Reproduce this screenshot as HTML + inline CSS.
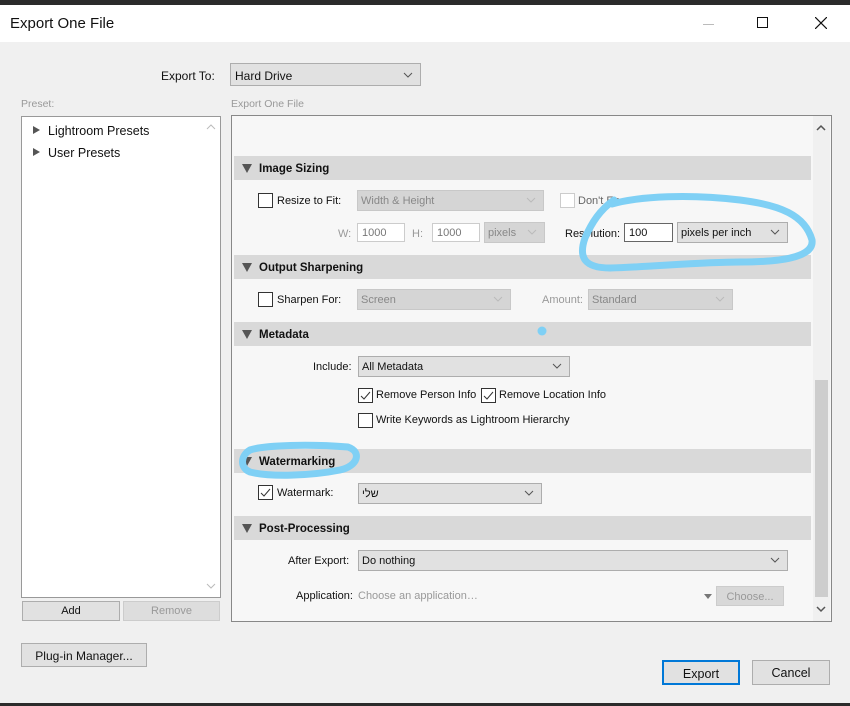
<!DOCTYPE html>
<html><head><meta charset="utf-8"><style>
*{box-sizing:border-box;margin:0;padding:0}
body{width:850px;height:706px;background:#2b2b2b;position:relative;overflow:hidden;font-family:"Liberation Sans","Noto Sans CJK JP",sans-serif;font-size:11px;color:#111}
.a{position:absolute;white-space:nowrap}
.dlg{position:absolute;left:0;top:5px;width:850px;height:698px;background:#f0f0f0}
.tb{position:absolute;left:0;top:5px;width:850px;height:37px;background:#fff}
.sel{position:absolute;background:#e1e1e1;border:1px solid #adadad;height:21px;padding:4px 3px 0;font-size:11px}
.sel.dis{background:#d5d5d5;border-color:#c8c8c8;color:#888}
.chev{position:absolute;right:6px;top:3px;width:12px;height:12px}
.inp{position:absolute;background:#fff;border:1px solid #aaa;height:19px;padding:3px 4px 0}
.inp.dis{border-color:#ccc;color:#777}
.cb{position:absolute;width:15px;height:15px;border:1px solid #333;background:#fff}
.cb.dis{border-color:#ccc}
.hdr{position:absolute;left:234px;width:577px;height:24px;background:#d9d9d9;font-weight:bold;font-size:11.5px;padding:7px 0 0 25px}
.tri{position:absolute;left:8px;top:8px;width:0;height:0;border-left:5px solid transparent;border-right:5px solid transparent;border-top:9px solid #555}
.btn{position:absolute;background:#e1e1e1;border:1px solid #adadad;text-align:center;font-size:12px}
.g{color:#999}
.l{margin-top:1px}
</style></head><body>
<div class="dlg"></div>
<div class="tb"></div>
<div class="a" style="left:10px;top:15px;font-size:15px">Export One File</div>
<div class="a" style="left:703px;top:24px;width:11px;height:1px;background:#bbb"></div>
<div class="a" style="left:757px;top:17px;width:11px;height:11px;border:1px solid #111"></div>
<svg class="a" style="left:815px;top:17px" width="12" height="12"><path d="M0 0L12 12M12 0L0 12" stroke="#111" stroke-width="1.2"/></svg>

<div class="a" style="left:161px;top:69px;font-size:12px">Export To:</div>
<div class="sel" style="left:230px;top:63px;width:191px;height:23px;font-size:12px;padding:5px 4px 0">Hard Drive<svg class="chev" style="top:5px" viewBox="0 0 12 12"><path d="M2 4l4 4 4-4" fill="none" stroke="#555"/></svg></div>

<div class="a g" style="left:21px;top:98px;font-size:10.5px">Preset:</div>
<div class="a g" style="left:231px;top:98px;font-size:10.5px">Export One File</div>

<div class="a" style="left:21px;top:116px;width:200px;height:482px;background:#fff;border:1px solid #999"></div>
<svg class="a" style="left:206px;top:123px" width="10" height="8"><path d="M1 6l4-4 4 4" fill="none" stroke="#bbb"/></svg>
<svg class="a" style="left:206px;top:582px" width="10" height="8"><path d="M1 2l4 4 4-4" fill="none" stroke="#bbb"/></svg>
<div class="a" style="left:33px;top:126px;border-top:4px solid transparent;border-bottom:4px solid transparent;border-left:7px solid #555"></div>
<div class="a" style="left:48px;top:124px;font-size:12.5px">Lightroom Presets</div>
<div class="a" style="left:33px;top:148px;border-top:4px solid transparent;border-bottom:4px solid transparent;border-left:7px solid #555"></div>
<div class="a" style="left:48px;top:146px;font-size:12.5px">User Presets</div>
<div class="btn" style="left:22px;top:601px;width:98px;height:20px;padding-top:3px;font-size:11px">Add</div>
<div class="btn" style="left:123px;top:601px;width:97px;height:20px;padding-top:3px;font-size:11px;color:#999;background:#ddd;border-color:#ccc">Remove</div>

<div class="a" style="left:231px;top:115px;width:601px;height:507px;background:#f7f7f7;border:1px solid #888"></div>
<div class="a" style="left:813px;top:116px;width:17px;height:505px;background:#f0f0f0"></div>
<div class="a" style="left:815px;top:380px;width:13px;height:217px;background:#cdcdcd"></div>
<svg class="a" style="left:816px;top:124px" width="10" height="8"><path d="M1 6l4-4 4 4" fill="none" stroke="#555" stroke-width="1.5"/></svg>
<svg class="a" style="left:816px;top:605px" width="10" height="8"><path d="M1 2l4 4 4-4" fill="none" stroke="#555" stroke-width="1.5"/></svg>

<div class="hdr" style="top:156px"><div class="tri"></div>Image Sizing</div>
<div class="cb" style="left:258px;top:193px"></div>
<div class="a" style="left:277px;top:195px">Resize to Fit:</div>
<div class="sel dis" style="left:357px;top:190px;width:187px">Width &amp; Height<svg class="chev" viewBox="0 0 12 12"><path d="M2 4l4 4 4-4" fill="none" stroke="#bbb"/></svg></div>
<div class="cb dis" style="left:560px;top:193px"></div>
<div class="a" style="left:578px;top:195px;color:#666">Don't En</div>
<div class="a g" style="left:338px;top:228px">W:</div>
<div class="inp dis" style="left:357px;top:223px;width:48px">1000</div>
<div class="a g" style="left:412px;top:228px">H:</div>
<div class="inp dis" style="left:432px;top:223px;width:48px">1000</div>
<div class="sel dis" style="left:484px;top:222px;width:61px">pixels<svg class="chev" viewBox="0 0 12 12"><path d="M2 4l4 4 4-4" fill="none" stroke="#bbb"/></svg></div>
<div class="a" style="left:565px;top:228px">Resolution:</div>
<div class="inp" style="left:624px;top:223px;width:49px;border-color:#666">100</div>
<div class="sel" style="left:677px;top:222px;width:111px">pixels per inch<svg class="chev" viewBox="0 0 12 12"><path d="M2 4l4 4 4-4" fill="none" stroke="#555"/></svg></div>

<div class="hdr" style="top:255px"><div class="tri"></div>Output Sharpening</div>
<div class="cb" style="left:258px;top:292px"></div>
<div class="a" style="left:277px;top:294px">Sharpen For:</div>
<div class="sel dis" style="left:357px;top:289px;width:154px">Screen<svg class="chev" viewBox="0 0 12 12"><path d="M2 4l4 4 4-4" fill="none" stroke="#bbb"/></svg></div>
<div class="a g" style="left:542px;top:294px">Amount:</div>
<div class="sel dis" style="left:588px;top:289px;width:145px">Standard<svg class="chev" viewBox="0 0 12 12"><path d="M2 4l4 4 4-4" fill="none" stroke="#bbb"/></svg></div>

<div class="hdr" style="top:322px"><div class="tri"></div>Metadata</div>
<div class="a" style="left:313px;top:361px">Include:</div>
<div class="sel" style="left:358px;top:356px;width:212px">All Metadata<svg class="chev" viewBox="0 0 12 12"><path d="M2 4l4 4 4-4" fill="none" stroke="#555"/></svg></div>
<div class="cb" style="left:358px;top:388px"><svg width="13" height="13"><path d="M2 7l3 3 6-7" fill="none" stroke="#333"/></svg></div>
<div class="a" style="left:376px;top:389px">Remove Person Info</div>
<div class="cb" style="left:481px;top:388px"><svg width="13" height="13"><path d="M2 7l3 3 6-7" fill="none" stroke="#333"/></svg></div>
<div class="a" style="left:499px;top:389px">Remove Location Info</div>
<div class="cb" style="left:358px;top:413px"></div>
<div class="a" style="left:376px;top:414px">Write Keywords as Lightroom Hierarchy</div>

<div class="hdr" style="top:449px"><div class="tri"></div>Watermarking</div>
<div class="cb" style="left:258px;top:485px"><svg width="13" height="13"><path d="M2 7l3 3 6-7" fill="none" stroke="#333"/></svg></div>
<div class="a" style="left:277px;top:487px">Watermark:</div>
<div class="sel" style="left:358px;top:483px;width:184px">שלי<svg class="chev" viewBox="0 0 12 12"><path d="M2 4l4 4 4-4" fill="none" stroke="#555"/></svg></div>

<div class="hdr" style="top:516px"><div class="tri"></div>Post-Processing</div>
<div class="a" style="left:288px;top:555px">After Export:</div>
<div class="sel" style="left:358px;top:550px;width:430px">Do nothing<svg class="chev" viewBox="0 0 12 12"><path d="M2 4l4 4 4-4" fill="none" stroke="#555"/></svg></div>
<div class="a" style="left:296px;top:590px">Application:</div>
<div class="a g" style="left:358px;top:590px">Choose an application…</div>
<div class="a" style="left:704px;top:594px;border-left:4px solid transparent;border-right:4px solid transparent;border-top:5px solid #777"></div>
<div class="btn" style="left:716px;top:586px;width:68px;height:20px;padding-top:4px;font-size:11px;color:#999;background:#d8d8d8;border-color:#ccc">Choose...</div>

<div class="btn" style="left:21px;top:643px;width:126px;height:24px;padding-top:5px;font-size:12px">Plug-in Manager...</div>
<div class="btn" style="left:662px;top:660px;width:78px;height:25px;padding-top:5px;border:2px solid #0078d7;font-size:12.5px">Export</div>
<div class="btn" style="left:752px;top:660px;width:78px;height:25px;padding-top:5px;font-size:12.5px">Cancel</div>

<svg class="a" style="left:0;top:0" width="850" height="706">
<g fill="none" stroke="#7fd0f5" stroke-width="7" stroke-linecap="round" stroke-linejoin="round">
<path d="M612 204C640 196 690 194 740 200C780 205 805 215 812 240C814 255 790 262 740 262C700 262 650 267 610 268C585 268 578 258 585 238C592 222 600 210 614 200"/>
<path d="M250 450C265 445 310 444 348 447C362 452 358 466 340 470C310 476 270 477 250 472C240 468 240 456 250 450"/>
</g>
<circle cx="542" cy="331" r="4.5" fill="#7fd0f5"/>
</svg>
</body></html>
